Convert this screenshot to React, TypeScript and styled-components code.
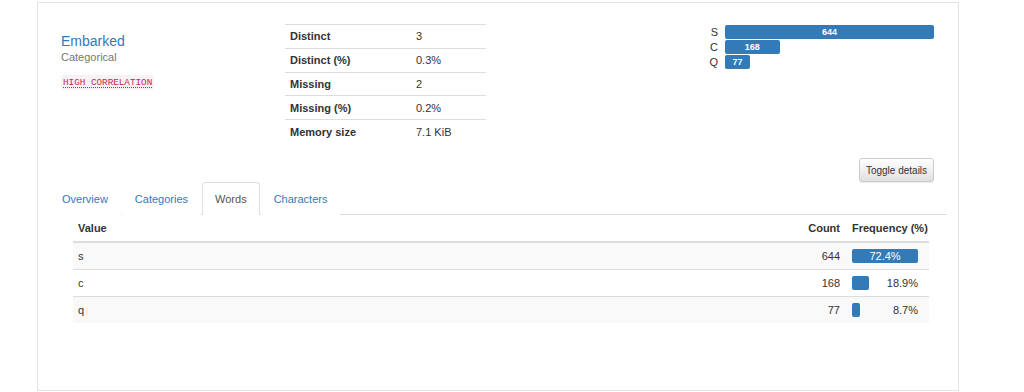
import React from "react";
import styled, { createGlobalStyle } from "styled-components";

const Global = createGlobalStyle`
  html, body { margin: 0; padding: 0; background: #fff; }
  body { font-family: "Liberation Sans", Arial, sans-serif; font-size: 12px; color: #333; }
  * { box-sizing: border-box; }
`;

const Page = styled.div`
  padding: 2px 0 0 37px;
`;

const Panel = styled.div`
  width: 922px;
  height: 389px;
  border: 1px solid #e3e3e3;
  display: flex;
  flex-direction: column;
`;

const Top = styled.div`
  display: flex;
  align-items: flex-start;
  padding: 21px 24px 0 23px;
`;

const TitleCol = styled.div`
  width: 224px;
  padding-top: 8px;
`;

const Title = styled.div`
  color: #337ab7;
  font-size: 14px;
  line-height: 18px;
`;

const Subtitle = styled.div`
  color: #777;
  font-size: 11px;
  line-height: 14px;
`;

const Badge = styled.code`
  display: inline-block;
  margin-top: 11px;
  font-family: "Liberation Mono", "DejaVu Sans Mono", monospace;
  font-size: 9.3px;
  line-height: 11px;
  color: #c7254e;
  background: #f9f2f4;
  border-radius: 3px;
  padding: 2px 2px;
  text-decoration: underline dotted;
  text-underline-offset: 2px;
`;

const StatsTable = styled.table`
  width: 201px;
  border-collapse: collapse;
  font-size: 11px;
  td {
    border-top: 1px solid #ddd;
    height: 23.8px;
    padding: 0 5px;
    vertical-align: middle;
  }
  td:first-child { font-weight: bold; width: 126px; }
`;

const ChartCol = styled.div`
  flex: 1;
  display: flex;
  justify-content: flex-end;
  padding-top: 1px;
`;

const Chart = styled.div`
  display: grid;
  grid-template-columns: 12px 209px;
  column-gap: 7px;
  row-gap: 1px;
  align-items: center;
`;

const ChartLabel = styled.div`
  font-size: 11px;
  line-height: 14px;
  text-align: right;
  color: #333;
`;

const ChartBar = styled.div`
  height: 14px;
  background: #337ab7;
  border-radius: 2px;
  color: #fff;
  font-size: 9px;
  font-weight: bold;
  line-height: 14px;
  text-align: center;
`;

const ToggleRow = styled.div`
  display: flex;
  justify-content: flex-end;
  padding: 0 24px;
  margin-top: 15px;
`;

const ToggleButton = styled.button`
  width: 75px;
  height: 24px;
  font-family: "Liberation Sans", Arial, sans-serif;
  font-size: 10px;
  color: #333;
  border: 1px solid #ccc;
  border-radius: 3px;
  background: linear-gradient(to bottom, #fff 0%, #e0e0e0 100%);
  box-shadow: 0 1px 1px rgba(0, 0, 0, 0.08);
  padding: 0;
`;

const Tabs = styled.div`
  display: flex;
  margin: 0 11px;
  border-bottom: 1px solid #ddd;
`;

const Tab = styled.div<{ $active?: boolean }>`
  height: 33px;
  padding: 0 12px;
  margin-right: 1px;
  margin-bottom: -1px;
  line-height: 32px;
  font-size: 11px;
  color: ${(p) => (p.$active ? "#555" : "#337ab7")};
  background: #fff;
  border: 1px solid ${(p) => (p.$active ? "#ddd" : "transparent")};
  border-bottom-color: ${(p) => (p.$active ? "#fff" : "transparent")};
  border-radius: 4px 4px 0 0;
`;

const FreqTable = styled.table`
  margin: 0 30px 0 35px;
  width: 856px;
  border-collapse: collapse;
  font-size: 11px;
  th {
    font-weight: bold;
    text-align: left;
    height: 27px;
    padding: 0 5px;
    border-bottom: 2px solid #ddd;
    vertical-align: middle;
    white-space: nowrap;
  }
  td {
    height: 27px;
    padding: 0 5px;
    border-top: 1px solid #ddd;
    vertical-align: middle;
  }
  tbody tr:nth-child(odd) td { background: #f9f9f9; }
`;

const NumTh = styled.th`
  && { text-align: right; width: 60px; }
`;

const NumTd = styled.td`
  text-align: right;
  width: 60px;
`;

const FreqTh = styled.th`
  && { width: 84px; padding: 0 0 0 7px; }
`;

const FreqTd = styled.td`
  && { width: 84px; padding: 0 11px 0 7px; }
`;

const FreqWrap = styled.div`
  display: flex;
  align-items: center;
  justify-content: space-between;
  width: 66px;
`;

const FreqBar = styled.div`
  height: 14px;
  background: #337ab7;
  border-radius: 2px;
  color: #fff;
  font-size: 11px;
  line-height: 14px;
  text-align: center;
`;

const FreqText = styled.span`
  font-size: 11px;
`;

const stats = [
  ["Distinct", "3"],
  ["Distinct (%)", "0.3%"],
  ["Missing", "2"],
  ["Missing (%)", "0.2%"],
  ["Memory size", "7.1 KiB"],
];

const chartData = [
  { label: "S", n: 644 },
  { label: "C", n: 168 },
  { label: "Q", n: 77 },
];

const rows = [
  { v: "s", n: 644, p: 72.4 },
  { v: "c", n: 168, p: 18.9 },
  { v: "q", n: 77, p: 8.7 },
];

export default function App() {
  return (
    <>
      <Global />
      <Page>
        <Panel>
          <Top>
            <TitleCol>
              <Title>Embarked</Title>
              <Subtitle>Categorical</Subtitle>
              <Badge>HIGH CORRELATION</Badge>
            </TitleCol>
            <StatsTable>
              <tbody>
                {stats.map(([k, v]) => (
                  <tr key={k}>
                    <td>{k}</td>
                    <td>{v}</td>
                  </tr>
                ))}
              </tbody>
            </StatsTable>
            <ChartCol>
              <Chart>
                {chartData.map((d) => (
                  <React.Fragment key={d.label}>
                    <ChartLabel>{d.label}</ChartLabel>
                    <div>
                      <ChartBar style={{ width: `${(d.n / 644) * 209}px` }}>{d.n}</ChartBar>
                    </div>
                  </React.Fragment>
                ))}
              </Chart>
            </ChartCol>
          </Top>
          <ToggleRow>
            <ToggleButton>Toggle details</ToggleButton>
          </ToggleRow>
          <Tabs>
            <Tab>Overview</Tab>
            <Tab>Categories</Tab>
            <Tab $active>Words</Tab>
            <Tab>Characters</Tab>
          </Tabs>
          <FreqTable>
            <thead>
              <tr>
                <th>Value</th>
                <NumTh>Count</NumTh>
                <FreqTh>Frequency (%)</FreqTh>
              </tr>
            </thead>
            <tbody>
              {rows.map((r, i) => (
                <tr key={r.v}>
                  <td>{r.v}</td>
                  <NumTd>{r.n}</NumTd>
                  <FreqTd>
                    <FreqWrap>
                      {i === 0 ? (
                        <FreqBar style={{ width: "66px" }}>{r.p}%</FreqBar>
                      ) : (
                        <>
                          <FreqBar style={{ width: `${(r.p / 72.4) * 66}px` }} />
                          <FreqText>{r.p}%</FreqText>
                        </>
                      )}
                    </FreqWrap>
                  </FreqTd>
                </tr>
              ))}
            </tbody>
          </FreqTable>
        </Panel>
      </Page>
    </>
  );
}
